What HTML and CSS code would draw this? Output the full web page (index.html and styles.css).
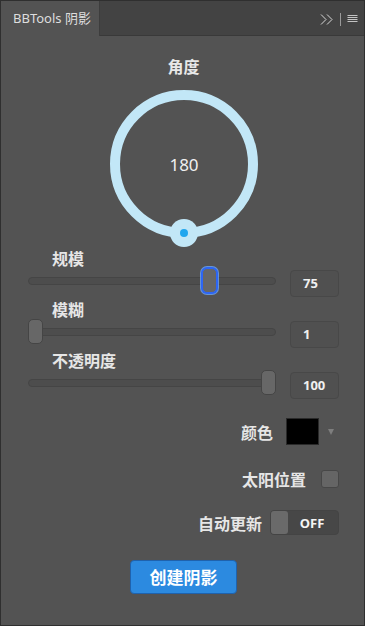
FILE: index.html
```html
<!DOCTYPE html>
<html lang="zh">
<head>
<meta charset="utf-8">
<title>BBTools 阴影</title>
<link rel="stylesheet" href="styles.css">
</head>
<body>
<div class="panel">
  <div class="header">
    <div class="tab">BBTools 阴影</div>
    <svg class="header-icons" width="46" height="35" viewBox="0 0 46 35">
      <polyline points="3,13.5 8,18.5 3,23.5" fill="none" stroke="#d8d8d8" stroke-width="1"/>
      <polyline points="9,13.5 14,18.5 9,23.5" fill="none" stroke="#d8d8d8" stroke-width="1"/>
      <line x1="22.5" y1="12" x2="22.5" y2="25" stroke="#9a9a9a" stroke-width="1"/>
      <line x1="29.5" y1="14.5" x2="39.5" y2="14.5" stroke="#c4c4c4" stroke-width="1"/>
      <line x1="29.5" y1="16.5" x2="39.5" y2="16.5" stroke="#c4c4c4" stroke-width="1"/>
      <line x1="29.5" y1="18.5" x2="39.5" y2="18.5" stroke="#c4c4c4" stroke-width="1"/>
      <line x1="29.5" y1="20.5" x2="39.5" y2="20.5" stroke="#c4c4c4" stroke-width="1"/>
    </svg>
  </div>
  <div class="main">
    <div class="dial-title">角度</div>
    <div class="dial">
      <svg width="148" height="160" viewBox="0 0 148 160">
        <circle cx="74" cy="74" r="69" fill="none" stroke="#c2e7f7" stroke-width="10"/>
        <circle cx="74" cy="143" r="14" fill="#c2e7f7"/>
        <circle cx="74" cy="143" r="4" fill="#1fa6ee"/>
        <text x="74" y="80.5" text-anchor="middle" class="dial-value">180</text>
      </svg>
    </div>

    <div class="field">
      <div class="field-label">规模</div>
      <div class="field-row">
        <div class="slider">
          <div class="track"></div>
          <div class="thumb active" style="left:174px"></div>
        </div>
        <div class="num">75</div>
      </div>
    </div>

    <div class="field">
      <div class="field-label">模糊</div>
      <div class="field-row">
        <div class="slider">
          <div class="track"></div>
          <div class="thumb" style="left:0px"></div>
        </div>
        <div class="num">1</div>
      </div>
    </div>

    <div class="field">
      <div class="field-label">不透明度</div>
      <div class="field-row">
        <div class="slider">
          <div class="track"></div>
          <div class="thumb" style="left:233px"></div>
        </div>
        <div class="num">100</div>
      </div>
    </div>

    <div class="opt opt-color">
      <span class="opt-label">颜色</span>
      <span class="swatch"></span>
      <span class="caret"></span>
    </div>

    <div class="opt opt-sun">
      <span class="opt-label">太阳位置</span>
      <span class="checkbox"></span>
    </div>

    <div class="opt opt-auto">
      <span class="opt-label">自动更新</span>
      <span class="toggle"><span class="knob"></span><span class="toggle-text">OFF</span></span>
    </div>

    <button class="create">创建阴影</button>
  </div>
</div>
</body>
</html>
```

FILE: styles.css
```css
* {
  box-sizing: border-box;
  margin: 0;
  padding: 0;
}

html, body {
  margin: 0;
  background: #535353;
  font-family: "Noto Sans", "Noto Sans CJK SC", sans-serif;
}

.panel {
  width: 365px;
  height: 626px;
  border: 1px solid #2f2f2f;
  background: #535353;
  display: flex;
  flex-direction: column;
  overflow: hidden;
}

.header {
  height: 35px;
  flex: none;
  background: #434343;
  box-shadow: inset 0 -1px 0 #393939;
  display: flex;
  justify-content: space-between;
  align-items: stretch;
}

.tab {
  width: 99px;
  background: #535353;
  border-right: 1px solid #3d3d3d;
  padding-left: 12px;
  font-size: 13px;
  line-height: 35px;
  color: #dedede;
  white-space: nowrap;
}

.header-icons {
  display: block;
}

.main {
  flex: 1;
  padding: 22px 25px 0 27px;
  display: flex;
  flex-direction: column;
}

.dial-title {
  text-align: center;
  font-size: 16px;
  font-weight: bold;
  line-height: 16px;
  height: 18px;
  color: #e8e8e8;
  font-family: "Noto Sans CJK SC", sans-serif;
}

.dial {
  align-self: center;
  margin-top: 14px;
  width: 148px;
  height: 160px;
}

.dial svg {
  display: block;
}

.dial-value {
  font-family: "Noto Sans", sans-serif;
  font-size: 17px;
  fill: #f0f0f0;
}

.field {
  margin-bottom: 3px;
}

.field-label {
  padding-left: 24px;
  height: 18px;
  line-height: 16px;
  font-size: 16px;
  font-weight: bold;
  color: #e6e6e6;
  font-family: "Noto Sans CJK SC", sans-serif;
}

.field-row {
  display: grid;
  grid-template-columns: 248px 49px;
  column-gap: 14px;
  height: 30px;
}

.slider {
  position: relative;
  height: 30px;
}

.track {
  margin-top: 9px;
  height: 8px;
  border-radius: 4px;
  background: #4d4d4d;
  border: 1px solid #454545;
}

.thumb {
  position: absolute;
  top: 0;
  width: 15px;
  height: 25px;
  border-radius: 5px;
  background: #676767;
  border: 1px solid #454545;
}

.thumb.active {
  border-color: #2d66f5;
  box-shadow: 0 0 0 1px #2d66f5, 0 0 0 2px rgba(110, 170, 255, 0.75);
}

.num {
  margin-top: 2px;
  height: 27px;
  border: 1px solid #484848;
  border-radius: 4px;
  background: #505050;
  padding-left: 12px;
  font-size: 13px;
  font-weight: bold;
  line-height: 25px;
  color: #f0f0f0;
}

.opt {
  display: flex;
  justify-content: flex-end;
  align-items: center;
  height: 27px;
}

.opt-label {
  font-size: 16px;
  font-weight: bold;
  color: #e6e6e6;
  font-family: "Noto Sans CJK SC", sans-serif;
}

.opt-color {
  margin-top: 15px;
  padding-right: 5px;
}

.opt-color .opt-label {
  margin-right: 13px;
}

.swatch {
  width: 33px;
  height: 27px;
  background: #000;
  border: 1px solid #2a2a2a;
}

.caret {
  margin-left: 9px;
  width: 0;
  height: 0;
  border-left: 3.5px solid transparent;
  border-right: 3.5px solid transparent;
  border-top: 6px solid #7e7e7e;
}

.opt-sun {
  margin-top: 20px;
}

.opt-sun .opt-label {
  margin-right: 15px;
}

.checkbox {
  width: 18px;
  height: 18px;
  border-radius: 3px;
  background: #656565;
  border: 1px solid #474747;
}

.opt-auto {
  margin-top: 17px;
}

.opt-auto .opt-label {
  margin-right: 8px;
}

.toggle {
  display: flex;
  align-items: center;
  width: 69px;
  height: 25px;
  border: 1px solid #444;
  border-radius: 4px;
  background: #474747;
}

.knob {
  width: 17px;
  height: 23px;
  border-radius: 3px;
  background: #6a6a6a;
}

.toggle-text {
  flex: 1;
  text-align: center;
  font-size: 13px;
  font-weight: bold;
  color: #f4f4f4;
  padding-right: 2px;
}

.create {
  align-self: center;
  margin-top: 24px;
  width: 107px;
  height: 34px;
  border: 1px solid #1f62ad;
  border-radius: 4px;
  background: #2c8ae0;
  color: #fff;
  font-size: 17px;
  font-weight: bold;
  font-family: "Noto Sans CJK SC", sans-serif;
  line-height: 32px;
  cursor: pointer;
}
```
